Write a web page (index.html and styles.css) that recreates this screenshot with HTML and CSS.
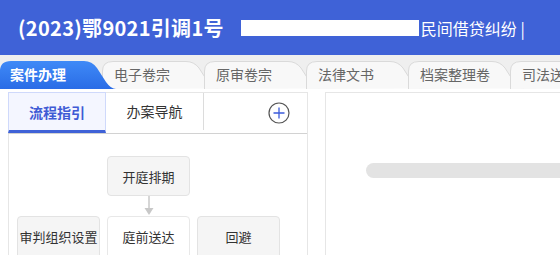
FILE: index.html
```html
<!DOCTYPE html>
<html lang="zh-CN">
<head>
    <meta charset="UTF-8">
    <meta name="viewport" content="width=device-width, initial-scale=1.0">
    <title>案件办理</title>
    <link rel="stylesheet" href="styles.css">
</head>
<body>
    <header class="case-header">
        <h1 class="case-no">(2023)鄂9021引调1号</h1>
        <span class="case-mask"></span>
        <span class="case-cause">民间借贷纠纷 |</span>
    </header>

    <nav class="tab-bar">
        <div class="tab active">
            <svg class="tab-shape" viewBox="0 0 116 28" preserveAspectRatio="none">
                <defs>
                    <linearGradient id="gActive" x1="0" y1="0" x2="0" y2="1">
                        <stop offset="0" stop-color="#3f8af7"/>
                        <stop offset="1" stop-color="#2a6ce6"/>
                    </linearGradient>
                </defs>
                <path d="M0,28 V10 Q0,0 11,0 H84 Q92,0 97,7 L106,21 Q111,28 116,28 Z" fill="url(#gActive)"/>
            </svg>
            <span class="tab-text">案件办理</span>
        </div>
        <div class="tab">
            <svg class="tab-shape" viewBox="0 0 116 28" preserveAspectRatio="none">
                <path d="M0.5,28 V10 Q0.5,0.5 11,0.5 H84 Q92,0.5 97,7 L106,21 Q111,27.5 116,27.5" class="tab-path"/>
            </svg>
            <span class="tab-text">电子卷宗</span>
        </div>
        <div class="tab">
            <svg class="tab-shape" viewBox="0 0 116 28" preserveAspectRatio="none">
                <path d="M0.5,28 V10 Q0.5,0.5 11,0.5 H84 Q92,0.5 97,7 L106,21 Q111,27.5 116,27.5" class="tab-path"/>
            </svg>
            <span class="tab-text">原审卷宗</span>
        </div>
        <div class="tab">
            <svg class="tab-shape" viewBox="0 0 116 28" preserveAspectRatio="none">
                <path d="M0.5,28 V10 Q0.5,0.5 11,0.5 H84 Q92,0.5 97,7 L106,21 Q111,27.5 116,27.5" class="tab-path"/>
            </svg>
            <span class="tab-text">法律文书</span>
        </div>
        <div class="tab">
            <svg class="tab-shape" viewBox="0 0 116 28" preserveAspectRatio="none">
                <path d="M0.5,28 V10 Q0.5,0.5 11,0.5 H84 Q92,0.5 97,7 L106,21 Q111,27.5 116,27.5" class="tab-path"/>
            </svg>
            <span class="tab-text">档案整理卷</span>
        </div>
        <div class="tab">
            <svg class="tab-shape" viewBox="0 0 116 28" preserveAspectRatio="none">
                <path d="M0.5,28 V10 Q0.5,0.5 11,0.5 H84 Q92,0.5 97,7 L106,21 Q111,27.5 116,27.5" class="tab-path"/>
            </svg>
            <span class="tab-text">司法送达</span>
        </div>
    </nav>

    <main class="workspace">
        <section class="side-panel">
            <div class="side-tabs">
                <div class="side-tab current">流程指引</div>
                <div class="side-tab">办案导航</div>
                <div class="side-add">
                    <svg width="22" height="22" viewBox="0 0 22 22">
                        <circle cx="11" cy="11" r="10" fill="none" stroke="#555" stroke-width="1.2"/>
                        <path d="M11 5.5 V16.5 M5.5 11 H16.5" stroke="#3b5bdb" stroke-width="1.3"/>
                    </svg>
                </div>
            </div>

            <div class="flow">
                <div class="flow-top">
                    <div class="node">开庭排期</div>
                </div>
                <div class="flow-arrow">
                    <svg width="10" height="20" viewBox="0 0 10 20">
                        <path d="M5 0 V13" stroke="#c8c8c8" stroke-width="1.5"/>
                        <path d="M0.5 12 L9.5 12 L5 19 Z" fill="#c8c8c8"/>
                    </svg>
                </div>
                <div class="flow-row">
                    <div class="node">审判组织设置</div>
                    <div class="node now">庭前送达</div>
                    <div class="node">回避</div>
                </div>
            </div>
        </section>

        <section class="main-panel">
            <div class="skeleton-bar"></div>
        </section>
    </main>
</body>
</html>
```

FILE: styles.css
```css
body {
    margin: 0;
    font-family: "Noto Sans CJK SC", "Noto Sans", sans-serif;
    background: #fff;
    overflow: hidden;
}

.case-header {
    height: 55px;
    background: #3f62d7;
    color: #fff;
    display: flex;
    align-items: center;
    padding-left: 18px;
}

.case-no {
    margin: 0;
    font-size: 20px;
    font-weight: bold;
    letter-spacing: 0.3px;
}

.case-mask {
    width: 178px;
    height: 16px;
    background: #fff;
    margin-left: 17px;
    margin-top: 1px;
}

.case-cause {
    font-size: 16px;
    margin-left: 2px;
}

.tab-bar {
    height: 33px;
    box-sizing: border-box;
    background: #efefef;
    border-bottom: 1px solid #d6d6d6;
    display: flex;
    align-items: flex-end;
    white-space: nowrap;
}

.tab {
    position: relative;
    flex: none;
    width: 102px;
    height: 27px;
    margin-bottom: -1px;
}

.tab-shape {
    position: absolute;
    left: 0;
    top: 0;
    width: 116px;
    height: 28px;
}

.tab-path {
    fill: #f8f8f8;
    stroke: #dadada;
    stroke-width: 1;
}

.tab.active {
    z-index: 2;
}

.tab-text {
    position: relative;
    display: block;
    padding-left: 12px;
    line-height: 27px;
    font-size: 14px;
    color: #666;
}

.tab.active .tab-text {
    color: #fff;
    font-weight: bold;
    padding-left: 10px;
}

.workspace {
    display: flex;
    gap: 17px;
    padding: 4px 0 0 8px;
}

.side-panel {
    flex: none;
    width: 300px;
    height: 170px;
    box-sizing: border-box;
    border: 1px solid #e6e6e6;
    border-bottom: none;
}

.side-tabs {
    display: flex;
    height: 42px;
    box-sizing: border-box;
    border-bottom: 1px solid #d2d2d2;
    margin-top: -1px;
    margin-left: -1px;
}

.side-tab {
    width: 98px;
    box-sizing: border-box;
    text-align: center;
    line-height: 38px;
    font-size: 14px;
    color: #333;
}

.side-tab + .side-tab {
    border-right: 1px solid #dcdcdc;
    margin: 1px 0 3px;
    line-height: 36px;
}

.side-tab.current {
    background: #f4f6ff;
    border: 1px solid #cfd9fb;
    border-bottom: 3px solid #3f62d7;
    color: #3f5bd5;
    font-weight: bold;
}

.side-add {
    flex: 1;
    display: flex;
    justify-content: flex-end;
    align-items: center;
    padding-right: 17px;
    padding-top: 1px;
}

.side-add svg {
    display: block;
}

.flow {
    padding: 22px 0 0 8px;
}

.flow-top,
.flow-row {
    display: grid;
    grid-template-columns: repeat(3, 83px);
    gap: 7px;
}

.flow-top .node {
    grid-column: 2;
}

.flow-arrow {
    width: 83px;
    margin-left: 90px;
    height: 20px;
    display: flex;
    justify-content: center;
}

.flow-arrow svg {
    display: block;
}

.node {
    height: 40px;
    box-sizing: border-box;
    background: #f5f5f5;
    border: 1px solid #e3e3e3;
    border-radius: 4px;
    font-size: 13px;
    color: #333;
    display: flex;
    align-items: center;
    justify-content: center;
}

.flow-row .node {
    height: 50px;
    align-items: flex-start;
    padding-top: 10px;
}

.node.now {
    background: #fff;
    border-color: #e8e8e8;
}

.main-panel {
    flex: 1;
    height: 170px;
    border-top: 1px solid #e6e6e6;
    border-left: 1px solid #e6e6e6;
    padding: 70px 0 0 40px;
    box-sizing: border-box;
}

.skeleton-bar {
    height: 15px;
    background: #e3e3e3;
    border-radius: 8px 0 0 8px;
}
```
